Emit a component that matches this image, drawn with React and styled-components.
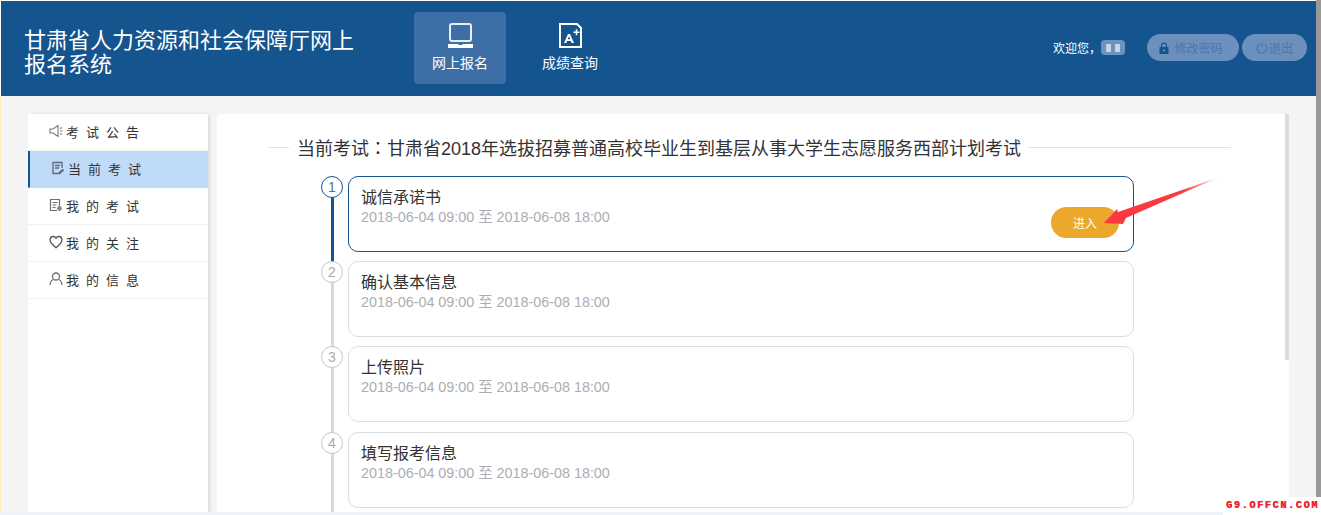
import React from 'react';
import styled, { createGlobalStyle } from 'styled-components';

const GlobalStyle = createGlobalStyle`
  html, body {
    margin: 0;
    padding: 0;
    background: #f4f4f4;
    overflow: hidden;
    font-family: "Liberation Sans", "Noto Sans CJK SC", sans-serif;
  }
  * {
    box-sizing: border-box;
  }
`;

const Page = styled.div`
  position: relative;
  display: flex;
  width: 1321px;
  height: 515px;
  overflow: hidden;
  background: #f4f4f4;
`;

const Content = styled.div`
  display: flex;
  flex-direction: column;
  width: 1316px;
  height: 512px;
`;

const ScrollThumb = styled.div`
  width: 5px;
  height: 515px;
  background: #999999;
`;

const Header = styled.header`
  display: flex;
  align-items: center;
  height: 95px;
  margin: 1px 0 0 1px;
  padding: 0 9px 0 23px;
  background: #14548f;
  box-shadow: 0 -1px 0 #ffffff, -1px 0 0 #ffffff, -1px -1px 0 #ffffff;
  color: #ffffff;
  flex-shrink: 0;
`;

const Title = styled.h1`
  width: 340px;
  margin: 9px 50px 0 0;
  font-size: 22px;
  font-weight: 400;
  line-height: 24px;
`;

const Nav = styled.nav`
  display: flex;
  gap: 18px;
  margin-bottom: 1px;
`;

const NavItem = styled.a`
  display: flex;
  flex-direction: column;
  align-items: center;
  width: 92px;
  height: 72px;
  padding-top: 10px;
  border-radius: 4px;
  background: ${p => (p.$active ? '#3e6ea6' : 'transparent')};
  font-size: 14px;
  line-height: 20px;

  svg {
    display: block;
    margin-bottom: 5px;
  }
`;

const UserArea = styled.div`
  display: flex;
  align-items: center;
  margin-left: auto;
  margin-bottom: 2px;
  font-size: 12px;
`;

const Welcome = styled.span`
  white-space: nowrap;
`;

const BlurName = styled.span`
  width: 24px;
  height: 15px;
  margin: 0 22px 0 0;
  border-radius: 4px;
  filter: blur(0.6px);
  background:
    linear-gradient(90deg, transparent 0 20%, #c6d5e6 20% 40%, transparent 40% 60%, #c6d5e6 60% 80%, transparent 80%) 0 4px / 100% 8px no-repeat,
    #6c93bc;
`;

const PillButton = styled.a`
  display: flex;
  align-items: center;
  justify-content: center;
  gap: ${p => p.$gap || 3}px;
  width: ${p => p.$width}px;
  height: 27px;
  margin-left: ${p => p.$left || 0}px;
  padding-right: ${p => p.$trim || 0}px;
  border-radius: 14px;
  background: #6b90bd;
  color: #4a77ab;
  font-size: 12px;
`;

const Body = styled.main`
  display: flex;
  flex: 1;
  gap: 9px;
  min-height: 0;
  padding: 18px 27px 0 28px;
`;

const Sidebar = styled.aside`
  width: 180px;
  background: #ffffff;
  border-radius: 4px 4px 0 0;
  box-shadow: 2px 0 3px rgba(0, 0, 0, 0.1);
`;

const SideItem = styled.a`
  display: flex;
  align-items: center;
  gap: 3px;
  height: 37px;
  padding: 0 0 2px 21px;
  border-left: ${p => (p.$active ? '2px solid #14548f' : 'none')};
  border-bottom: 1px solid ${p => (p.$active ? '#c0dbf7' : '#f1f1f1')};
  background: ${p => (p.$active ? '#c0dbf7' : '#ffffff')};
  color: #333333;
  font-size: 13px;
  letter-spacing: 7px;
  svg {
    flex-shrink: 0;
  }
`;

const Panel = styled.section`
  position: relative;
  flex: 1;
  min-width: 0;
  padding: 21px 52px 0 52px;
  background: #ffffff;
  border-radius: 4px 4px 0 0;

  &::after {
    content: '';
    position: absolute;
    top: 0;
    right: 0;
    width: 4px;
    height: 246px;
    background: #dcdcdc;
  }
`;

const ExamHeading = styled.div`
  display: flex;
  align-items: center;
  gap: 8px;
  height: 24px;
  color: #333333;
  font-size: 18px;
  white-space: nowrap;

  &::before,
  &::after {
    content: '';
    height: 1px;
    background: #e1e1e1;
  }
  &::before {
    width: 20px;
  }
  &::after {
    width: 202px;
  }
`;

const Colon = styled.span`
  font-family: "Noto Sans CJK TC", sans-serif;
`;

const Steps = styled.ol`
  display: flex;
  flex-direction: column;
  gap: 9.2px;
  width: 813px;
  margin: 17px 0 0 52px;
  padding: 0;
  list-style: none;
`;

const Step = styled.li`
  position: relative;
  height: 76px;
  padding-left: 27px;

  &::before {
    content: '';
    position: absolute;
    left: 9.5px;
    top: 20px;
    width: 3px;
    height: 70px;
    background: ${p => (p.$active ? '#14548f' : '#d9d9d9')};
  }
`;

const StepNumber = styled.span`
  position: absolute;
  z-index: 1;
  left: 0;
  top: 0;
  display: flex;
  align-items: center;
  justify-content: center;
  width: 22px;
  height: 22px;
  border: 1px solid ${p => (p.$active ? '#14548f' : '#c6c6c6')};
  border-radius: 50%;
  background: #ffffff;
  color: ${p => (p.$active ? '#5a6fa0' : '#aaaaaa')};
  font-size: 14px;
`;

const Card = styled.div`
  display: flex;
  justify-content: space-between;
  height: 100%;
  padding: 11px 14px 13px 12px;
  border: 1px solid ${p => (p.$active ? '#14548f' : '#dddddd')};
  border-radius: 10px;
  background: #ffffff;
`;

const StepTitle = styled.div`
  color: #333333;
  font-size: 16px;
  line-height: 20px;
`;

const StepDate = styled.div`
  color: #aaaeb3;
  font-size: 14.35px;
  line-height: 18px;
`;

const EnterButton = styled.a`
  display: flex;
  align-items: center;
  justify-content: center;
  align-self: flex-end;
  width: 68px;
  height: 31px;
  border-radius: 16px;
  background: #eba82c;
  color: #ffffff;
  font-size: 12px;
`;

const Arrow = styled.svg`
  position: absolute;
  left: 1100px;
  top: 175px;
`;

const BottomStrip = styled.div`
  position: absolute;
  left: 0;
  bottom: 0;
  width: 1223px;
  height: 3px;
  background: #eef3fa;
`;

const LeftEdge = styled.div`
  position: absolute;
  left: 0;
  top: 96px;
  width: 1px;
  height: 419px;
  background: #fdeeb8;
`;

const Watermark = styled.div`
  position: absolute;
  right: 0;
  bottom: 0;
  width: 98px;
  height: 18px;
  padding: 0 0 0 3px;
  background: #ffffff;
  color: #f5202c;
  font-family: "Liberation Mono", monospace;
  font-size: 10px;
  font-weight: 700;
  letter-spacing: 1.75px;
  line-height: 18px;
  text-shadow: 0.5px 0 0 #f5202c;
  white-space: nowrap;
`;

const BookIcon = () => (
  <svg width="26" height="26" viewBox="0 0 26 26" fill="none">
    <rect x="3" y="2" width="21" height="17" rx="2" stroke="#e8eef6" strokeWidth="2" />
    <path d="M1 22h10l1 1h3l1-1h10v4H1z" fill="#ffffff" />
  </svg>
);

const ScoreIcon = () => (
  <svg width="24" height="26" viewBox="0 0 24 26" fill="none">
    <path d="M2 2h17l4 4v19H2z" stroke="#ffffff" strokeWidth="2" />
    <path d="M6 21l4-9h2l4 9h-2.400l-.7-2H9.100l-.7 2zM9.800 17.300h2.400L11 14.300z" fill="#ffffff" />
    <path d="M15.500 9.500h2.200V7.300h1.600v2.200h2.200v1.600h-2.200v2.200h-1.600v-2.200h-2.200z" fill="#ffffff" />
  </svg>
);

const LockIcon = () => (
  <svg width="10" height="12" viewBox="0 0 10 12">
    <path d="M2 5V3.500a3 3 0 0 1 6 0V5h1.500v7H.5V5zm1.300 0h3.400V3.500a1.700 1.700 0 0 0-3.400 0z" fill="#14548f" />
    <rect x="4" y="7.500" width="2" height="2" fill="#6b90bd" />
  </svg>
);

const PowerIcon = () => (
  <svg width="12" height="12" viewBox="0 0 12 12" fill="none" stroke="#4a77ab" strokeWidth="1.300">
    <path d="M3.200 2.400a4.800 4.800 0 1 0 5.600 0M6 .5v5" />
  </svg>
);

const SpeakerIcon = () => (
  <svg width="14" height="14" viewBox="0 0 14 14" fill="none" stroke="#777777" strokeWidth="1.100">
    <path d="M1 5h3l5-3.500v11L4 9H1zM11 4.500l2-1M11 7h2.500M11 9.500l2 1" />
  </svg>
);

const NoteIcon = () => (
  <svg width="14" height="14" viewBox="0 0 14 14" fill="none" stroke="#5f6b7a" strokeWidth="1.300">
    <path d="M11 7V1.500H2v11h5M4 4.500h5M4 7h4" />
    <path d="M7.500 12.800l5-4.300" strokeWidth="2.200" />
  </svg>
);

const DocIcon = () => (
  <svg width="14" height="14" viewBox="0 0 14 14" fill="none" stroke="#6f6f6f" strokeWidth="1.200">
    <path d="M8 12.500H1.500v-11h9V8M3.500 4.500h5M3.500 7h4M3.500 9.500h3" />
    <circle cx="10.500" cy="10.500" r="2.400" fill="#888888" stroke="none" />
  </svg>
);

const HeartIcon = () => (
  <svg width="14" height="14" viewBox="0 0 14 14" fill="none" stroke="#555555" strokeWidth="1.300">
    <path d="M7 12.800C3.500 10 1 7.800 1 4.800 1 2.800 2.500 1.500 4.200 1.500 5.400 1.500 6.400 2.100 7 3.200 7.600 2.100 8.600 1.500 9.800 1.500 11.500 1.500 13 2.800 13 4.800c0 3-2.500 5.200-6 8z" />
  </svg>
);

const UserIcon = () => (
  <svg width="14" height="14" viewBox="0 0 14 14" fill="none" stroke="#6f6f6f" strokeWidth="1.300">
    <circle cx="7" cy="4.500" r="3.500" />
    <path d="M1 13c.3-3 1.800-5 3.500-5.500M13 13c-.3-3-1.800-5-3.500-5.500" />
  </svg>
);

const menu = [
  { label: '考试公告', icon: <SpeakerIcon /> },
  { label: '当前考试', icon: <NoteIcon />, active: true },
  { label: '我的考试', icon: <DocIcon /> },
  { label: '我的关注', icon: <HeartIcon /> },
  { label: '我的信息', icon: <UserIcon /> }
];

const steps = ['诚信承诺书', '确认基本信息', '上传照片', '填写报考信息'];

const examDate = '2018-06-04 09:00 至 2018-06-08 18:00';

const App = () => (
  <Page>
    <GlobalStyle />
    <Content>
      <Header>
        <Title>甘肃省人力资源和社会保障厅网上报名系统</Title>
        <Nav>
          <NavItem $active>
            <BookIcon />
            网上报名
          </NavItem>
          <NavItem>
            <ScoreIcon />
            成绩查询
          </NavItem>
        </Nav>
        <UserArea>
          <Welcome>欢迎您，</Welcome>
          <BlurName />
          <PillButton $width={92} $gap={5} $trim={4}>
            <LockIcon />
            修改密码
          </PillButton>
          <PillButton $width={65} $left={3} $gap={1}>
            <PowerIcon />
            退出
          </PillButton>
        </UserArea>
      </Header>
      <Body>
        <Sidebar>
          {menu.map(item => (
            <SideItem key={item.label} $active={item.active}>
              {item.icon}
              <span>{item.label}</span>
            </SideItem>
          ))}
        </Sidebar>
        <Panel>
          <ExamHeading>
            <span>
              当前考试<Colon>：</Colon>甘肃省2018年选拔招募普通高校毕业生到基层从事大学生志愿服务西部计划考试
            </span>
          </ExamHeading>
          <Steps>
            {steps.map((title, i) => (
              <Step key={title} $active={i === 0}>
                <StepNumber $active={i === 0}>{i + 1}</StepNumber>
                <Card $active={i === 0}>
                  <div>
                    <StepTitle>{title}</StepTitle>
                    <StepDate>{examDate}</StepDate>
                  </div>
                  {i === 0 && <EnterButton>进入</EnterButton>}
                </Card>
              </Step>
            ))}
          </Steps>
        </Panel>
      </Body>
    </Content>
    <ScrollThumb />
    <Arrow width="122" height="52" viewBox="0 0 122 52">
      <defs>
        <linearGradient id="arrowFade" x1="0" x2="1" y1="1" y2="0">
          <stop offset="0.7" stopColor="#fa3a40" />
          <stop offset="1" stopColor="#ffd0d2" />
        </linearGradient>
      </defs>
      <path d="M4 48L17 34 18 37 117 3 26 43 23 49z" fill="url(#arrowFade)" />
    </Arrow>
    <LeftEdge />
    <BottomStrip />
    <Watermark>G9.OFFCN.COM</Watermark>
  </Page>
);

export default App;
